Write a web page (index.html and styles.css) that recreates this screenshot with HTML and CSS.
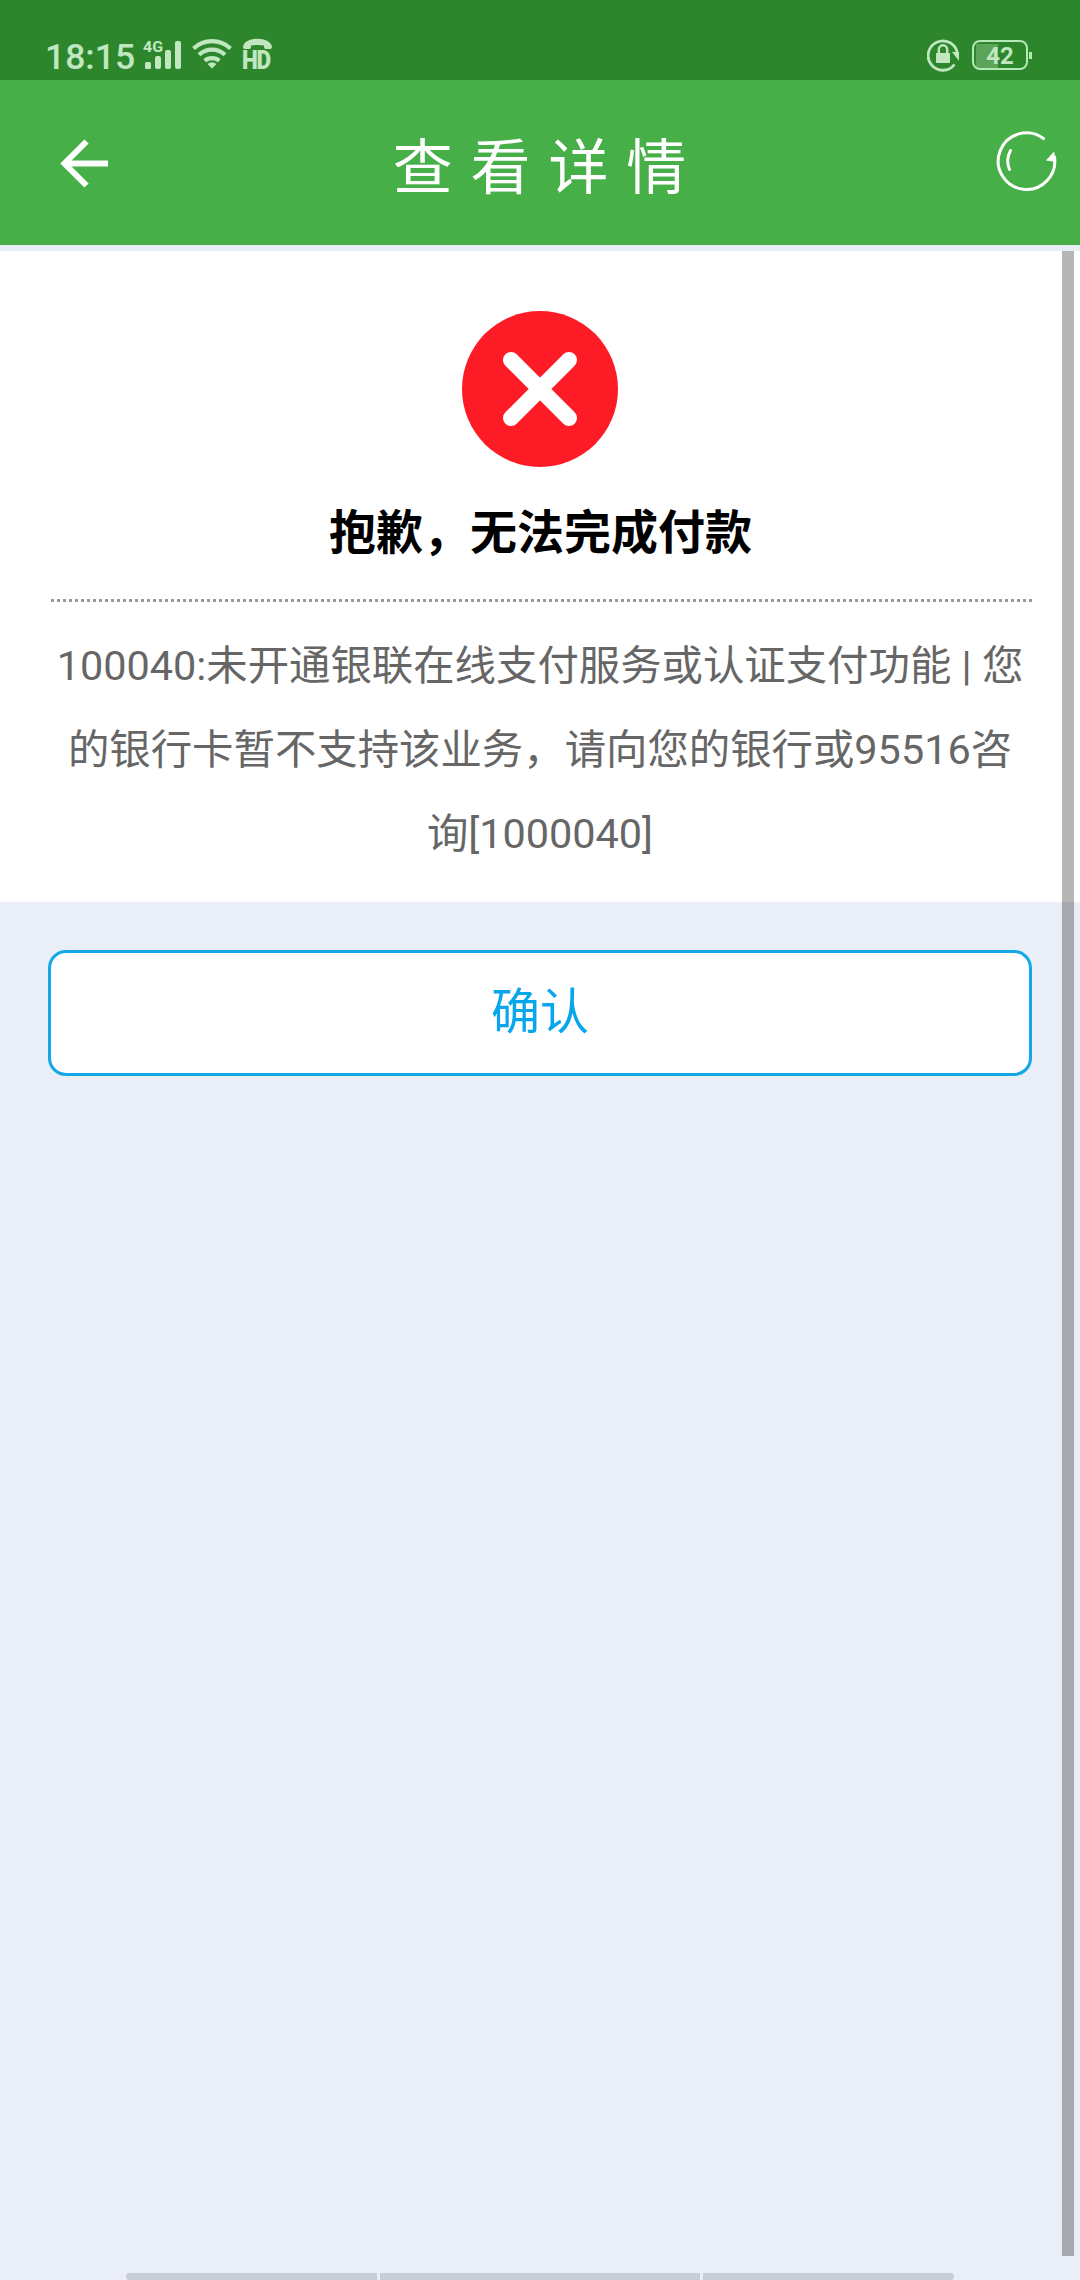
FILE: index.html
```html
<!DOCTYPE html>
<html lang="zh-CN">
<head>
    <meta charset="UTF-8">
    <meta name="viewport" content="width=device-width, initial-scale=1.0">
    <title>查看详情</title>
    <link rel="stylesheet" href="styles.css">
</head>
<body>

<div class="status-bar">
    <span class="time">18:15</span>
    <svg class="signal" width="40" height="32" viewBox="0 0 40 32">
        <text x="0" y="12" class="net" textLength="20" lengthAdjust="spacingAndGlyphs">4G</text>
        <rect x="2" y="22" width="6" height="7" rx="1.5"/>
        <rect x="12" y="16" width="6" height="13" rx="2"/>
        <rect x="22" y="10" width="6" height="19" rx="2"/>
        <rect x="32" y="1" width="6" height="28" rx="2"/>
    </svg>
    <svg class="wifi" width="40" height="32" viewBox="0 0 40 32">
        <g fill="none" stroke-width="4.2">
            <path d="M1.5 11.5a27 27 0 0 1 37 0"/>
            <path d="M7 17.8a19 19 0 0 1 26 0"/>
            <path d="M12.7 23.8a11 11 0 0 1 14.6 0"/>
        </g>
        <path d="M15.5 27q4.5-3.3 9 0L20 31.5z"/>
    </svg>
    <div class="hd">
        <svg width="32" height="11" viewBox="0 0 32 11">
            <path d="M1 9C2-2 29-2 30 9q0 2-2 2h-4q-2 0-2-2V7.5Q15.500 6.300 9 7.500V9q0 2-2 2H3Q1 11 1 9z"/>
        </svg>
        <span>HD</span>
    </div>
    <div class="status-right">
        <svg width="34" height="34" viewBox="0 0 34 34">
            <path d="M27.5 26.5A14.700 14.700 0 1 1 30.300 15" fill="none" stroke-width="2.8"/>
            <path d="M25 14h7v9z"/>
            <rect x="9" y="15" width="14" height="10" rx="1"/>
            <path d="M11.8 16v-4.500a4.200 4.200 0 0 1 8.400 0V16" fill="none" stroke-width="2.4"/>
        </svg>
        <div class="battery"><span>42</span></div>
    </div>
</div>

<header>
    <svg class="back" width="50" height="50" viewBox="0 0 50 50">
        <path d="M26.5 3.5 4.5 25.5l22 22M5 25.5h43" />
    </svg>
    <h1>查 看 详 情</h1>
    <svg class="refresh" width="62" height="62" viewBox="0 0 62 62">
        <path d="M47.5 8.5A28.300 28.300 0 1 0 58.500 27"/>
        <path d="M14.5 20.5Q9.500 30 13.500 39.500"/>
        <path class="tip" d="M58 21.5 50 30.500l10 1.500z"/>
    </svg>
</header>

<main>
    <div class="result">
        <svg class="error-icon" width="156" height="156" viewBox="0 0 156 156">
            <circle cx="78" cy="78" r="78"/>
            <path d="M49 49l58 58M107 49L49 107"/>
        </svg>
        <h2>抱歉，无法完成付款</h2>
        <div class="divider"></div>
        <p>100040:未开通银联在线支付服务或认证支付功能 | 您的银行卡暂不支持该业务，请向您的银行或95516咨询[1000040]</p>
    </div>
    <button type="button">确认</button>
    <div class="scrollbar"></div>
</main>

<footer>
    <span></span><span class="middle"></span><span></span>
</footer>

</body>
</html>
```

FILE: styles.css
```css
* {
    box-sizing: border-box;
}

body {
    display: flex;
    flex-direction: column;
    height: 2280px;
    margin: 0;
    overflow: hidden;
    background-color: #eaeef6;
    font-family: Roboto, "Noto Sans CJK SC", sans-serif;
}

/* 状态栏 */
.status-bar {
    display: flex;
    align-items: flex-start;
    height: 80px;
    padding: 40px 48px 0 45px;
    background-color: #2d862c;
    color: #c0e7c0;
}

.status-bar svg {
    fill: #c0e7c0;
    stroke: none;
}

.status-bar svg [stroke-width] {
    stroke: #c0e7c0;
}

.time {
    width: 98px;
    font-size: 35.5px;
    font-weight: 500;
    line-height: 34px;
    white-space: nowrap;
}

.net {
    font-size: 14px;
    font-weight: bold;
}

.wifi {
    margin: -3px 0 0 9px;
}

.hd {
    display: flex;
    flex-direction: column;
    width: 34px;
    margin: -2px 0 0 10px;
}

.hd span {
    font-size: 25px;
    font-weight: 900;
    line-height: 24px;
    letter-spacing: -1.5px;
    transform: scaleX(0.9);
    transform-origin: left;
}

.status-right {
    display: flex;
    margin: -2px 0 0 auto;
}

.battery {
    position: relative;
    width: 56px;
    height: 30px;
    margin: 2px 4px 0 11px;
    border: 2px solid #b4e8b4;
    border-radius: 8px;
    background: linear-gradient(to right, #5ba45a 22px, transparent 22px) 2px 2px no-repeat;
    font-size: 24px;
    font-weight: bold;
    line-height: 28px;
    text-align: center;
}

.battery::after {
    content: "";
    position: absolute;
    top: 10px;
    right: -6px;
    width: 3px;
    height: 7px;
    background-color: #b4e8b4;
}

header {
    display: flex;
    justify-content: space-between;
    height: 165px;
    padding: 50px 22px 0 60px;
    background-color: #46af48;
    color: white;
}

header svg {
    fill: none;
    stroke: white;
    stroke-width: 3;
    stroke-linecap: round;
}

header .back {
    margin-top: 8px;
    stroke-width: 6;
    stroke-linecap: butt;
}

header .tip {
    fill: white;
    stroke: none;
}

h1 {
    margin: 6px 27px 0 0;
    font-size: 60px;
    font-weight: normal;
    line-height: 66px;
    word-spacing: 3px;
}

main {
    position: relative;
    flex: 1;
    padding-top: 6px;
}

.result {
    display: flex;
    flex-direction: column;
    align-items: center;
    height: 651px;
    padding: 60px 48px 0;
    background-color: white;
}

.error-icon {
    flex-shrink: 0;
    fill: #fd1b25;
}

.error-icon path {
    stroke: white;
    stroke-width: 16;
    stroke-linecap: round;
}

h2 {
    margin: 31px 0 0 1px;
    font-size: 47px;
    line-height: 70px;
}

.divider {
    width: 100%;
    height: 3px;
    margin-top: 31px;
    background: repeating-linear-gradient(to left, #999 0, #999 3px, transparent 3px, transparent 6px);
}

p {
    margin: 22px 0 0;
    padding: 0 4px;
    color: #666;
    font-size: 41.4px;
    line-height: 84px;
    text-align: center;
}

button {
    display: block;
    width: 984px;
    height: 126px;
    margin: 48px auto 0;
    padding: 0 0 12px;
    border: 3px solid #14a7e8;
    border-radius: 18px;
    background-color: white;
    color: #08a7ed;
    font-family: inherit;
    font-size: 49px;
}

.scrollbar {
    position: absolute;
    top: 6px;
    right: 6px;
    bottom: 17px;
    width: 12px;
    background-color: rgba(0, 0, 0, 0.29);
}

/* 底部手势条 */
footer {
    display: flex;
    justify-content: center;
    gap: 3px;
    height: 7px;
}

footer span {
    width: 251px;
    background-color: #c9cdd6;
}

footer span:first-child {
    border-radius: 4px 0 0 4px;
}

footer span:last-child {
    border-radius: 0 4px 4px 0;
}

footer .middle {
    width: 320px;
}
```
